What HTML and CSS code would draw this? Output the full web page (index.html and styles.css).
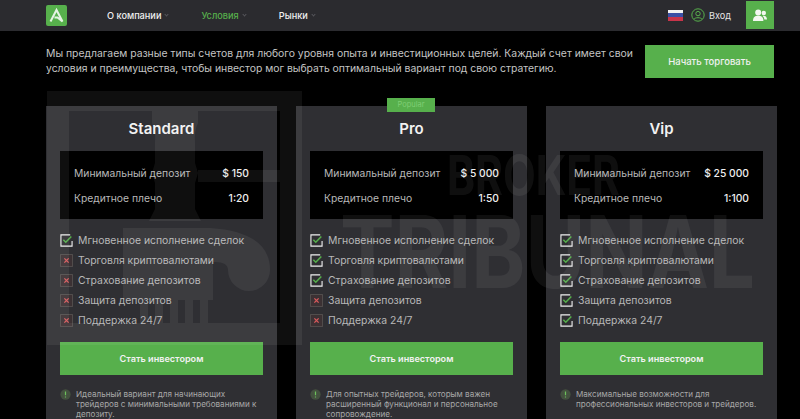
FILE: index.html
```html
<!DOCTYPE html>
<html lang="ru">
<head>
<meta charset="utf-8">
<title>Условия</title>
<link rel="stylesheet" href="styles.css">
</head>
<body>
<svg width="0" height="0" class="defs">
  <symbol id="ok" viewBox="0 0 14 14"><path d="M11 1H1v12h12V7.500" fill="none" stroke="#f0f0f0" stroke-width="1.200"/><path d="M3.600 6.200l2.600 2.600L12.200 2.600" fill="none" stroke="#57b04c" stroke-width="1.600"/></symbol>
  <symbol id="no" viewBox="0 0 14 14"><rect x=".6" y=".6" width="12.800" height="12.800" fill="#3c3134" stroke="#55504f" stroke-width="1"/><path d="M4.700 4.700l4.600 4.600M9.300 4.700l-4.600 4.600" stroke="#d8595b" stroke-width="1.400"/></symbol>
  <symbol id="info" viewBox="0 0 12 12"><circle cx="6" cy="6" r="5.600" fill="#44513f"/><path d="M6 2.800v4M6 8.200v1.200" stroke="#6cc05c" stroke-width="1.300"/></symbol>
</svg>
<header class="top">
  <div class="top-left">
    <a class="logo"><svg width="21" height="21" viewBox="0 0 21 21"><path d="M4.500 16.500L10.500 5 16.500 16.500 11.500 12.500H8.500" fill="none" stroke="#e6f3e3" stroke-width="2"/></svg></a>
    <nav class="menu">
      <a class="menu-item">О компании<i class="chev"></i></a>
      <a class="menu-item active">Условия<i class="chev"></i></a>
      <a class="menu-item">Рынки<i class="chev"></i></a>
    </nav>
  </div>
  <div class="top-right">
    <span class="flag"><b class="fw"></b><b class="fb"></b><b class="fr"></b></span>
    <svg class="user" width="14" height="14" viewBox="0 0 14 14"><circle cx="7" cy="7" r="6.200" fill="none" stroke="#57b04c" stroke-width="1"/><circle cx="7" cy="5.600" r="2.200" fill="none" stroke="#57b04c"/><path d="M3 11.200c1-2 7-2 8 0" fill="none" stroke="#57b04c"/></svg>
    <a class="login">Вход</a>
    <a class="reg"><svg width="14" height="13" viewBox="0 0 14 13"><circle cx="5.200" cy="3.400" r="3" fill="#f2f7f0"/><path d="M0 12c0-4 2-5.300 5.200-5.300S10.400 8 10.400 12z" fill="#f2f7f0"/><circle cx="10.800" cy="4" r="2.200" fill="#f2f7f0"/><path d="M9.500 7c2.800-.6 4.500 1 4.500 3.500h-2.700c0-1.400-.6-2.600-1.800-3.500z" fill="#f2f7f0"/></svg></a>
  </div>
</header>
<main class="page">
  <section class="intro">
    <p class="intro-text">Мы предлагаем разные типы счетов для любого уровня опыта и инвестиционных целей. Каждый счет имеет свои условия и преимущества, чтобы инвестор мог выбрать оптимальный вариант под свою стратегию.</p>
    <a class="start">Начать торговать</a>
  </section>
  <section class="plans">
    <article class="plan">
      <h2>Standard</h2>
      <dl class="terms">
        <div><dt>Минимальный депозит</dt><dd>$ 150</dd></div>
        <div><dt>Кредитное плечо</dt><dd>1:20</dd></div>
      </dl>
      <ul class="feats">
        <li><svg><use href="#ok"/></svg>Мгновенное исполнение сделок</li>
        <li><svg><use href="#no"/></svg>Торговля криптовалютами</li>
        <li><svg><use href="#no"/></svg>Страхование депозитов</li>
        <li><svg><use href="#no"/></svg>Защита депозитов</li>
        <li><svg><use href="#no"/></svg>Поддержка 24/7</li>
      </ul>
      <a class="invest">Стать инвестором</a>
      <p class="note"><svg><use href="#info"/></svg><span>Идеальный вариант для начинающих трейдеров с минимальными требованиями к депозиту.</span></p>
    </article>
    <article class="plan">
      <span class="badge">Popular</span>
      <h2>Pro</h2>
      <dl class="terms">
        <div><dt>Минимальный депозит</dt><dd>$ 5 000</dd></div>
        <div><dt>Кредитное плечо</dt><dd>1:50</dd></div>
      </dl>
      <ul class="feats">
        <li><svg><use href="#ok"/></svg>Мгновенное исполнение сделок</li>
        <li><svg><use href="#ok"/></svg>Торговля криптовалютами</li>
        <li><svg><use href="#ok"/></svg>Страхование депозитов</li>
        <li><svg><use href="#no"/></svg>Защита депозитов</li>
        <li><svg><use href="#no"/></svg>Поддержка 24/7</li>
      </ul>
      <a class="invest">Стать инвестором</a>
      <p class="note"><svg><use href="#info"/></svg><span>Для опытных трейдеров, которым важен расширенный функционал и персональное сопровождение.</span></p>
    </article>
    <article class="plan">
      <h2>Vip</h2>
      <dl class="terms">
        <div><dt>Минимальный депозит</dt><dd>$ 25 000</dd></div>
        <div><dt>Кредитное плечо</dt><dd>1:100</dd></div>
      </dl>
      <ul class="feats">
        <li><svg><use href="#ok"/></svg>Мгновенное исполнение сделок</li>
        <li><svg><use href="#ok"/></svg>Торговля криптовалютами</li>
        <li><svg><use href="#ok"/></svg>Страхование депозитов</li>
        <li><svg><use href="#ok"/></svg>Защита депозитов</li>
        <li><svg><use href="#ok"/></svg>Поддержка 24/7</li>
      </ul>
      <a class="invest">Стать инвестором</a>
      <p class="note"><svg><use href="#info"/></svg><span>Максимальные возможности для профессиональных инвесторов и трейдеров.</span></p>
    </article>
  </section>
</main>
<svg class="mark" width="800" height="419" viewBox="0 0 800 419">
  <path fill-rule="evenodd" d="M47 91H302V345H47ZM69 111V323H280V111Z"/>
  <path d="M152 111h46v12q-4 8-3 20v20l3 10-3 10v26l6 12h-52l6-12v-26l-3-10 3-10v-20q1-12-3-20z"/>
  <path d="M198 170h82v12h-82z"/>
  <path d="M123 228H210Q270 232 270 270A21 21 0 0 1 228 270Q228 262 215 262H213V300H123Z"/>
  <path d="M140 300h8v23h-8zM155 300h8v23h-8zM170 300h8v23h-8zM185 300h8v23h-8zM200 300h8v23h-8z"/>
  <text class="mark-a" x="447" y="195" textLength="173" lengthAdjust="spacingAndGlyphs">BROKER</text>
  <text class="mark-b" x="340" y="288" textLength="415" lengthAdjust="spacingAndGlyphs">TRIBUNAL</text>
</svg>
</body>
</html>
```
FILE: styles.css
```css
* { box-sizing: border-box; }
html, body { margin: 0; height: 419px; overflow: hidden; }
body { background: #000; color: #dcdcdc; font-family: Inter, "Liberation Sans", sans-serif; position: relative; }
.defs { position: absolute; }
.top { height: 31px; background: #2b2b2f; display: flex; justify-content: space-between; padding: 1px 26px 2px 46px; }
.top-left, .top-right { display: flex; align-items: center; }
.logo { width: 21px; height: 21px; background: #57b04c; border-radius: 2px; display: flex; }
.menu { display: flex; gap: 33px; margin-left: 40px; font-size: 9.200px; font-weight: 500; color: #f0f0f0; }
.menu-item { display: flex; align-items: center; }
.menu-item.active { color: #57b04c; }
.chev { width: 3px; height: 3px; border: solid #55555a; border-width: 0 1px 1px 0; transform: rotate(45deg); margin: -2px 0 0 4px; }
.flag { width: 15px; height: 11px; display: flex; flex-direction: column; margin-right: 8px; }
.flag b { flex: 1; }
.fw { background: #f2f2f2; }
.fb { background: #3b4fa5; }
.fr { background: #c8344a; }
.login { font-size: 9.200px; color: #e4e4e4; margin: 0 15px 0 4px; }
.reg { width: 28px; height: 28px; background: #57b04c; display: flex; align-items: center; justify-content: center; }
.page { padding: 14px 26px 0 46px; }
.intro { display: flex; justify-content: space-between; align-items: flex-start; height: 61px; }
.intro-text { margin: 1px 0 0; width: 592px; font-size: 10.400px; line-height: 15px; color: #c4c4c4; }
.start { width: 129px; height: 33px; background: #57b04c; color: #f0f0f0; font-size: 9.500px; font-weight: 500; display: flex; align-items: center; justify-content: center; }
.plans { display: grid; grid-template-columns: repeat(3, 231px); gap: 19px; }
.plan { position: relative; background: #2f2f33; height: 320px; padding: 14px; display: flex; flex-direction: column; }
.plan h2 { margin: 0; font-size: 15px; line-height: 17px; font-weight: 600; color: #f2f2f2; text-align: center; }
.badge { position: absolute; top: -8px; left: 91px; width: 48px; height: 14px; background: #57b04c; color: #7fce74; font-size: 7.500px; line-height: 14px; text-align: center; }
.terms { margin: 14px 0 0; flex: none; height: 68px; background: #000; padding: 9px 14px; display: flex; flex-direction: column; justify-content: space-between; }
.terms div { display: flex; justify-content: space-between; align-items: center; height: 25px; font-size: 10.300px; }
.terms dt { color: #b8b8b8; }
.terms dd { margin: 0; color: #efefef; font-weight: 500; }
.feats { list-style: none; margin: 11px 0 0; padding: 0; flex: none; }
.feats li { height: 20px; display: flex; align-items: center; gap: 5px; font-size: 10.400px; color: #b8b8b8; }
.feats svg { width: 13px; height: 13px; flex: none; }
.invest { margin-top: 12px; flex: none; height: 33px; background: #57b04c; color: #f2f2f2; font-size: 9.100px; font-weight: 600; display: flex; align-items: center; justify-content: center; }
.note { margin: 14px 0 0; display: flex; gap: 5px; font-size: 8.100px; line-height: 10px; color: #a8a8a8; }
.note svg { width: 11px; height: 11px; flex: none; }
.mark { position: absolute; left: 0; top: 0; pointer-events: none; fill: #fff; opacity: .06; }
.mark-a { font-size: 55px; font-weight: 700; }
.mark-b { font-size: 100px; font-weight: 700; }
```
